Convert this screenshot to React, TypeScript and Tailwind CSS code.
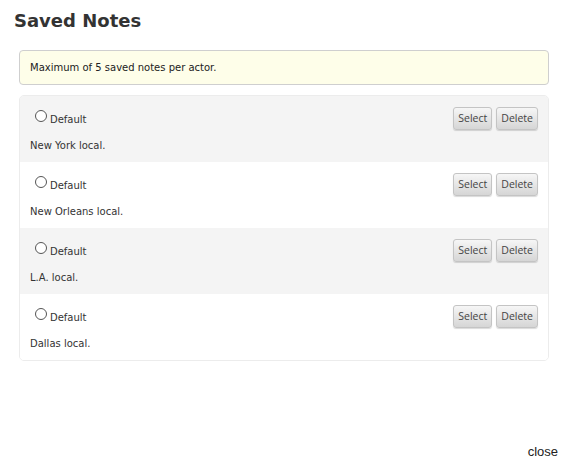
const notes = ['New York local.', 'New Orleans local.', 'L.A. local.', 'Dallas local.'];

function NoteButton({ children }: { children: React.ReactNode }) {
  return (
    <button className="h-[23px] rounded-[3px] border border-[#c4c4c4] bg-gradient-to-b from-[#f6f6f6] to-[#d6d6d6] px-[4px] font-['Open_Sans',sans-serif] text-[10.5px] text-[#444] shadow-[0_1px_1px_rgba(0,0,0,0.15)]">
      {children}
    </button>
  );
}

export default function App() {
  return (
    <div className="relative h-[467px] w-[568px] bg-white font-['DejaVu_Sans',sans-serif] text-[#222]">
      <h1 className="px-[14px] pt-[10px] text-[18px] font-bold leading-[22px] text-[#333]">Saved Notes</h1>

      <div className="mx-[19px] mt-[18px] flex h-[35px] items-center rounded-[4px] border border-[#cfcfcf] bg-[#fefee9] px-[10px] text-[10px]">
        Maximum of 5 saved notes per actor.
      </div>

      <div className="mx-[19px] mt-[10px] overflow-hidden rounded-[5px] border border-[#ececec]">
        {notes.map((note, i) => (
          <div key={note} className={`flex h-[66px] flex-col px-[10px] ${i % 2 === 0 ? 'bg-[#f4f4f4]' : 'bg-white'}`}>
            <div className="mt-[11px] flex items-start justify-between">
              <label className="ml-[5px] mt-[3px] flex items-start gap-[3px] text-[10px] leading-[14px] text-[#333]">
                <span className="inline-block h-[12px] w-[12px] rounded-full border border-[#555] bg-white" />
                <span className="mt-[3px]">Default</span>
              </label>
              <div className="flex gap-[4px]">
                <NoteButton>Select</NoteButton>
                <NoteButton>Delete</NoteButton>
              </div>
            </div>
            <p className="mt-[8px] text-[10px] text-[#333]">{note}</p>
          </div>
        ))}
      </div>

      <span className="absolute bottom-[6px] right-[10px] font-['Liberation_Sans',sans-serif] text-[13px] text-[#222]">close</span>
    </div>
  );
}
